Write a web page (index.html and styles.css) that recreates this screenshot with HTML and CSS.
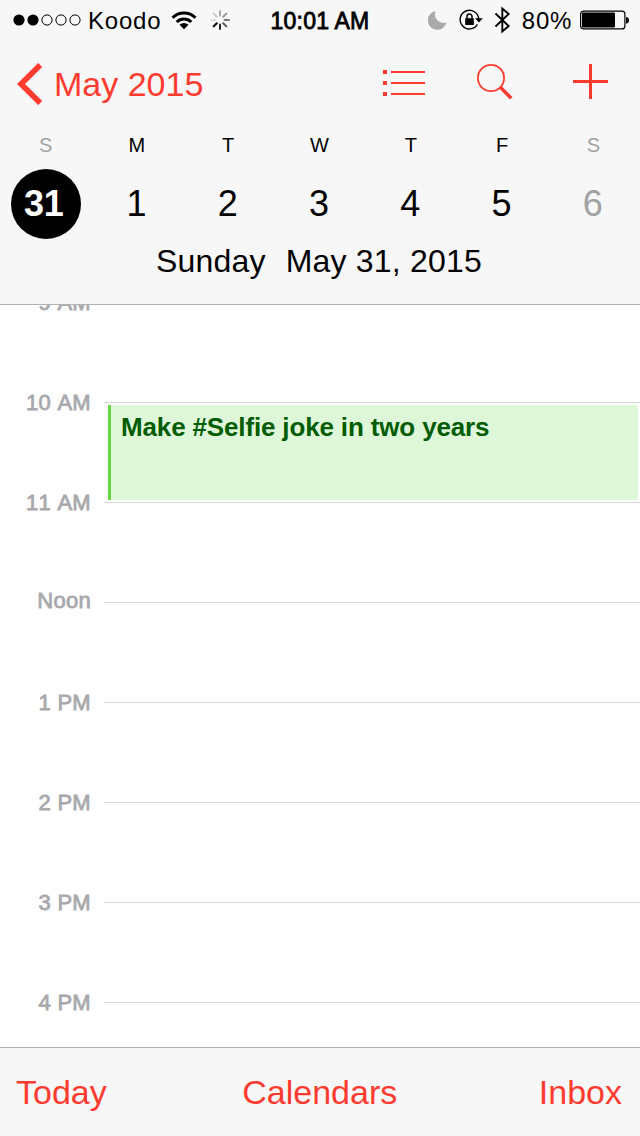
FILE: index.html
```html
<!DOCTYPE html>
<html lang="en">
<head>
<meta charset="utf-8">
<title>Calendar</title>
<link rel="stylesheet" href="styles.css">
</head>
<body>
<div class="app">
  <header class="header">
    <div class="status">
      <div class="status-left">
        <svg class="signal" width="69" height="14" viewBox="0 0 69 14"><circle cx="6" cy="7" r="5.6"/><circle cx="20" cy="7" r="5.6"/><g fill="none" stroke="#000" stroke-width="1"><circle cx="34" cy="7" r="5.1"/><circle cx="48" cy="7" r="5.1"/><circle cx="62" cy="7" r="5.1"/></g></svg>
        <span class="carrier">Koodo</span>
        <svg class="wifi" width="26" height="20" viewBox="0 0 26 20"><g fill="none" stroke="#000" stroke-width="3"><path d="M1.5 7.7A16.2 16.2 0 0 1 24.5 7.7"/><path d="M5.7 12A10.4 10.4 0 0 1 20.3 12"/></g><path d="M13 19.2L8.5 14.8Q13 11.3 17.5 14.8Z"/></svg>
        <svg class="spinner" width="20" height="20" viewBox="-10 -10 20 20"><g stroke-width="2" stroke-linecap="round"><path d="M0-4.5V-9" stroke="#aaa"/><path d="M3.2-3.2L6.4-6.4" stroke="#999"/><path d="M4.5 0H9" stroke="#777"/><path d="M3.2 3.2L6.4 6.4" stroke="#555"/><path d="M0 4.5V9" stroke="#222"/><path d="M-3.2 3.2L-6.4 6.4" stroke="#000"/><path d="M-4.5 0H-9" stroke="#ddd"/><path d="M-3.2-3.2L-6.4-6.4" stroke="#ccc"/></g></svg>
      </div>
      <span class="clock">10:01 AM</span>
      <div class="status-right">
        <svg width="20" height="20" viewBox="0 0 20 20"><path fill="#aaa" d="M7.5 1A9.5 9.5 0 1 0 18.6 12.3A8.7 8.7 0 0 1 7.5 1Z"/></svg>
        <svg class="lock" width="24" height="22" viewBox="0 0 24 22"><path fill="none" stroke="#000" stroke-width="1.4" d="M18.4 15.4A9.3 9.3 0 1 1 19.7 10"/><path d="M16 9.3H23.8L19.9 13.5Z"/><path d="M6.2 9.2H14.8V16H6.2Z"/><path fill="none" stroke="#000" stroke-width="1.5" d="M8 9.5V7.5A2.5 2.5 0 0 1 13 7.5V9.5"/></svg>
        <svg class="bluetooth" width="17" height="28" viewBox="0 0 17 28"><path fill="none" stroke="#000" stroke-width="1.9" d="M1.5 7.5L14.7 20L8.3 25.5V2.5L14.7 8L1.5 20.5"/></svg>
        <span class="percent">80%</span>
        <svg class="battery" width="50" height="20" viewBox="0 0 50 20"><rect x=".6" y="1.1" width="44.3" height="17.8" rx="3" fill="none" stroke="#000" stroke-width="1.2"/><rect x="2" y="2.5" width="33" height="15" rx="1"/><path d="M46 7Q49 7.3 49 10.2Q49 13.2 46 13.7Z"/></svg>
      </div>
    </div>
    <nav class="nav">
      <div class="back">
        <svg width="26" height="42" viewBox="0 0 26 42"><path fill="none" stroke="#ff3b30" stroke-width="5.6" d="M23.2 2L4 21L23.2 40"/></svg>
        <span>May 2015</span>
      </div>
      <div class="tools">
        <svg class="list" width="42" height="28" viewBox="0 0 42 28"><path fill="none" stroke="#ff3b30" stroke-width="2" d="M8 3H42M8 14H42M8 25H42"/><path fill="none" stroke="#ff3b30" stroke-width="4" d="M0 3H4M0 14H4M0 25H4"/></svg>
        <svg class="search" width="36" height="36" viewBox="0 0 36 36"><circle cx="14" cy="14" r="13.1" fill="none" stroke="#ff3b30" stroke-width="1.8"/><path stroke="#ff3b30" stroke-width="3.5" d="M23.3 23.3L34.3 34.3"/></svg>
        <svg class="plus" width="36" height="36" viewBox="0 0 36 36"><path stroke="#ff3b30" stroke-width="3" d="M17.5 0V35M0 17.5H35"/></svg>
      </div>
    </nav>
    <div class="week">
      <div class="day weekend"><span class="name">S</span><span class="num selected">31</span></div>
      <div class="day"><span class="name">M</span><span class="num">1</span></div>
      <div class="day"><span class="name">T</span><span class="num">2</span></div>
      <div class="day"><span class="name">W</span><span class="num">3</span></div>
      <div class="day"><span class="name">T</span><span class="num">4</span></div>
      <div class="day"><span class="name">F</span><span class="num">5</span></div>
      <div class="day weekend"><span class="name">S</span><span class="num">6</span></div>
    </div>
    <div class="full-date"><span>Sunday</span><span>May 31, 2015</span></div>
  </header>
  <main class="hours">
    <div class="hour"><span class="label">9 AM</span><div class="slot"></div></div>
    <div class="hour"><span class="label">10 AM</span><div class="slot"><div class="event">Make #Selfie joke in two years</div></div></div>
    <div class="hour"><span class="label">11 AM</span><div class="slot"></div></div>
    <div class="hour"><span class="label noon">Noon</span><div class="slot"></div></div>
    <div class="hour"><span class="label">1 PM</span><div class="slot"></div></div>
    <div class="hour"><span class="label">2 PM</span><div class="slot"></div></div>
    <div class="hour"><span class="label">3 PM</span><div class="slot"></div></div>
    <div class="hour"><span class="label">4 PM</span><div class="slot"></div></div>
  </main>
  <footer class="footer"><span>Today</span><span class="calendars">Calendars</span><span>Inbox</span></footer>
</div>
</body>
</html>
```
FILE: styles.css
```css
* { box-sizing: border-box; }
body { margin: 0; font-family: "Liberation Sans", Arial, sans-serif; color: #000; background: #fff; }
svg { display: block; flex: none; }
span { white-space: nowrap; }
.app { width: 640px; height: 1136px; display: flex; flex-direction: column; overflow: hidden; }

.header { height: 305px; flex: none; background: #f7f7f7; border-bottom: 1px solid #b2b2b2; }
.status { height: 40px; display: grid; grid-template: 40px / 1fr auto 1fr; align-items: center; font-size: 24px; line-height: 38px; }
.status span { padding-top: 2px; }
.status-left { display: flex; align-items: center; padding-left: 13px; }
.carrier { margin-left: 6px; letter-spacing: .8px; }
.wifi { margin-left: 10px; }
.spinner { margin-left: 13px; }
.clock { font-size: 23px; letter-spacing: .2px; -webkit-text-stroke: .8px #000; }
.status-right { display: flex; align-items: center; justify-content: flex-end; padding-right: 10px; }
.lock { margin-left: 11px; }
.bluetooth { margin-left: 11px; }
.percent { margin-left: 11px; letter-spacing: .7px; }
.battery { margin-left: 8px; }

.nav { height: 88px; display: flex; justify-content: space-between; padding: 0 31px 0 17px; color: #ff3b30; font-size: 34px; line-height: 88px; }
.back { display: flex; align-items: center; gap: 11px; }
.tools { display: flex; align-items: center; }
.list { margin-bottom: 2px; }
.search { margin: 0 0 4px 52px; }
.plus { margin: 0 0 4px 60px; }

.week { height: 112px; display: flex; padding: 0 1px 0 0; }
.day { flex: 1; display: flex; flex-direction: column; align-items: center; }
.name { height: 41px; font-size: 20px; line-height: 34px; }
.num { width: 70px; height: 70px; padding-right: 1px; font-size: 36px; line-height: 70px; text-align: center; }
.weekend { color: #a2a2a2; }
.selected { padding-right: 4px; border-radius: 50%; background: #000; color: #fff; font-weight: bold; letter-spacing: -.5px; }
.full-date { display: flex; justify-content: center; gap: 20px; padding-right: 2px; font-size: 32px; line-height: 42px; letter-spacing: .2px; }

.hours { flex: 1; min-height: 0; overflow: hidden; }
.hour { height: 100px; display: flex; }
.hour:first-child { margin-top: -3px; }
.label { width: 91px; height: 24px; margin: -11px 13px 0 0; text-align: right; font-size: 22px; line-height: 24px; color: #a8a8ad; -webkit-text-stroke: .8px #a8a8ad; letter-spacing: .3px; font-kerning: none; }
.noon { margin-top: -13px; }
.slot { flex: 1; padding: 2px 2px 2px 4px; border-top: 1px solid #d5d5d5; }
.event { height: 95px; padding: 7px 0 0 10px; border-left: 3px solid #65d644; background: #dff7d9; color: #005c00; font-size: 26px; line-height: 30px; font-weight: bold; letter-spacing: -.15px; }

.footer { height: 89px; flex: none; display: flex; justify-content: space-between; padding: 0 18px 0 16px; border-top: 1px solid #b2b2b2; background: #f7f7f7; color: #ff3b30; font-size: 34px; line-height: 88px; }
.calendars { margin-right: 6px; }
```
